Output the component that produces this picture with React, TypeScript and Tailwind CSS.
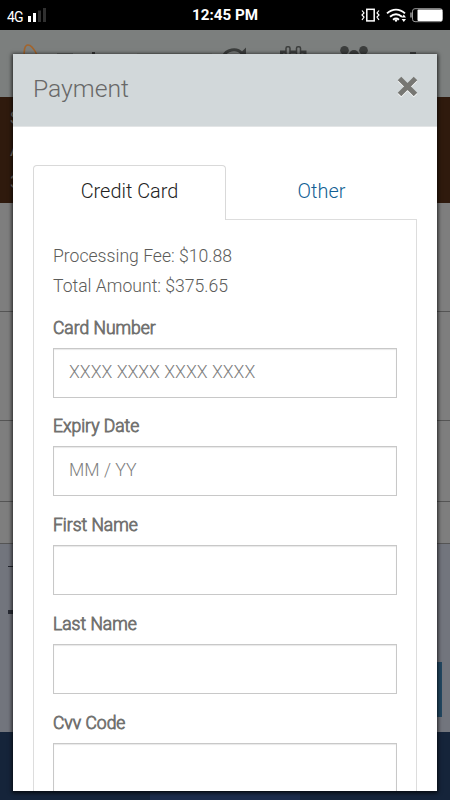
import React from "react";

function StatusBar() {
  return (
    <div className="relative flex h-[30px] shrink-0 items-center justify-center bg-black text-white">
      <div className="absolute left-[7px] top-0 flex h-[30px] items-center">
        <span className="w-[17px] pt-[4px] text-[14px] leading-none tracking-[-0.9px]">4G</span>
        <svg className="ml-[4px]" width="20" height="30" viewBox="0 0 20 30">
          <rect x="0" y="16" width="3" height="6" fill="#fff" />
          <rect x="5" y="13" width="3" height="9" fill="#fff" />
          <rect x="10" y="10.5" width="3" height="11.5" fill="#303030" />
          <rect x="15" y="8" width="3" height="14" fill="#303030" />
        </svg>
      </div>
      <span className="pt-[2px] text-[15.200px] font-bold leading-none">12:45 PM</span>
      <svg className="absolute right-0 top-0" width="90" height="30" viewBox="0 0 90 30" fill="none" stroke="#fff">
        <rect x="6.8" y="9.3" width="7.4" height="11.6" strokeWidth="1.5" />
        <path d="M2 10.500l2 2.500-2 2 2 2-2 3M19 10.500l-2 2.500 2 2-2 2 2 3" strokeWidth="1.2" />
        <path d="M27 13.400c5.500-5 12.500-5 18 0M30 16.800c4-3.500 8-3.500 12 0M33 19.700c2-1.600 4-1.600 6 0" strokeWidth="1.900" />
        <circle cx="36" cy="20.500" r="1.200" fill="#fff" stroke="none" />
        <path d="M43.800 14.500l2.200 3h-4.400zM43.800 22l2.200-3h-4.400z" fill="#fff" stroke="none" />
        <rect x="52.500" y="8.700" width="30" height="13" rx="2.500" stroke="#999" strokeWidth="1" />
        <rect x="57.500" y="9.500" width="24.700" height="11.500" rx="1" fill="#fff" stroke="none" />
        <path d="M51 12.500v5" stroke="#999" strokeWidth="1.500" />
      </svg>
    </div>
  );
}

function BackgroundPage() {
  return (
    <div className="flex flex-1 flex-col">
      <div className="h-[67px] bg-[#7c7f7e]">
        <svg width="450" height="67" viewBox="0 30 450 67" fill="none">
          <path d="M24.500 59c-1-8 0-14 3.500-14 3.500 0 6 4 8.500 9" stroke="#a3642b" strokeWidth="1.600" />
          <path d="M137 53.500h75" stroke="#727573" strokeWidth="1" />
          <path d="M57 53.500h16" stroke="#606361" strokeWidth="1" />
          <path d="M92 52h3v4h-3z" fill="#333" />
          <path d="M223 57c3-8 14-9.500 19-3.500l2.500-2.500v7h-8" stroke="#3c3e3d" strokeWidth="3" />
          <path d="M281.500 56v-4h23.500v4" stroke="#3c3e3d" strokeWidth="3" />
          <rect x="286" y="46.700" width="4" height="9" rx="1.500" fill="#7c7f7e" stroke="#3c3e3d" strokeWidth="1.500" />
          <rect x="296.500" y="46.700" width="4" height="9" rx="1.500" fill="#7c7f7e" stroke="#3c3e3d" strokeWidth="1.500" />
          <circle cx="344.500" cy="50.300" r="4.300" fill="#3c3e3d" />
          <circle cx="363.500" cy="50.300" r="4.300" fill="#3c3e3d" />
          <circle cx="354" cy="55" r="5" fill="#3c3e3d" />
          <path d="M410 52h6v4h-6z" fill="#3c3e3d" />
        </svg>
      </div>
      <div className="h-[106px] overflow-hidden bg-[#2f1a0d] pl-[10px] pt-[5px] text-[18px] leading-[32px] text-[#84796f]">
        <div>S</div>
        <div>A</div>
        <div>3</div>
      </div>
      <div className="h-[109px] border-b border-[#555] bg-[#7e7e7e]" />
      <div className="h-[109px] border-b border-[#555] bg-[#7e7e7e]" />
      <div className="h-[81px] border-b border-[#555] bg-[#7e7e7e]" />
      <div className="h-[42px] border-b border-[#555] bg-[#7e7e7e]" />
      <div className="flex h-[188px] justify-between bg-[#72757d] pr-2">
        <div className="pl-2 pt-[22px]">
          <div className="h-px w-6 bg-[#22252d]" />
          <div className="mt-[43px] h-[4px] w-6 bg-[#292c35]" />
        </div>
        <div className="mt-[118px] h-[55px] w-[60px] bg-[#234862]" />
      </div>
      <div className="flex flex-1 flex-col items-center justify-end bg-[#15243a]">
        <div className="h-2 w-[150px] bg-[#1c2c4c]" />
      </div>
    </div>
  );
}

function Field({ label, placeholder }: { label: string; placeholder?: string }) {
  return (
    <div className="mb-[14.800px] h-[84px]">
      <label className="block h-[34px] text-[17.500px] font-light leading-[28px] text-[#70706e] [-webkit-text-stroke:0.8px_#70706e]">
        {label}
      </label>
      <input
        placeholder={placeholder}
        className="block h-[50px] w-full border border-[#c8c8c8] bg-white px-[15px] pb-[2px] text-[17.700px] font-light shadow-[inset_0_1px_1px_#e8e8e8] outline-none placeholder:text-[#808080]"
      />
    </div>
  );
}

function PaymentModal() {
  return (
    <div className="absolute left-[13px] top-[54px] flex h-[737px] w-[424px] flex-col overflow-hidden bg-white shadow-[0_1px_4px_1px_rgba(0,0,0,0.75)]">
      <div className="flex h-[73px] shrink-0 items-center justify-between border-b border-[#e3e5e6] bg-[#d2d8da] pl-5 pr-[19px]">
        <h1 className="-mt-[2px] text-[24.700px] font-light leading-none text-[#686868]">Payment</h1>
        <svg className="-mt-[6px]" width="21" height="22" viewBox="0 0 21 22" fill="none" strokeWidth="5">
          <path d="M2.500 3.500l16 16M18.500 3.500l-16 16" stroke="#fff" />
          <path d="M2.500 2.500l16 16M18.500 2.500l-16 16" stroke="#777773" />
        </svg>
      </div>
      <div className="flex flex-1 flex-col px-5 pt-[38px]">
        <div className="flex h-[55px] shrink-0 text-[19.900px] font-light">
          <div className="flex w-[193px] items-center justify-center rounded-t border border-b-0 border-[#d9d9d9] pb-[3px] text-[#222]">
            Credit Card
          </div>
          <div className="flex flex-1 items-center justify-center border-b border-[#ddd] text-[#125f94]">
            Other
          </div>
        </div>
        <div className="flex-1 border-x border-[#ddd] px-[19px] pt-[21px]">
          <div className="mb-[12.700px] text-[17.600px] font-light leading-[30px] text-[#5c5c5a]">
            <p>Processing Fee: $10.88</p>
            <p>Total Amount: $375.65</p>
          </div>
          <Field label="Card Number" placeholder="XXXX XXXX XXXX XXXX" />
          <Field label="Expiry Date" placeholder="MM / YY" />
          <Field label="First Name" />
          <Field label="Last Name" />
          <Field label="Cvv Code" />
        </div>
      </div>
    </div>
  );
}

export default function App() {
  return (
    <div className="relative flex h-[800px] w-[450px] flex-col overflow-hidden font-[Roboto,sans-serif]">
      <StatusBar />
      <BackgroundPage />
      <PaymentModal />
    </div>
  );
}
